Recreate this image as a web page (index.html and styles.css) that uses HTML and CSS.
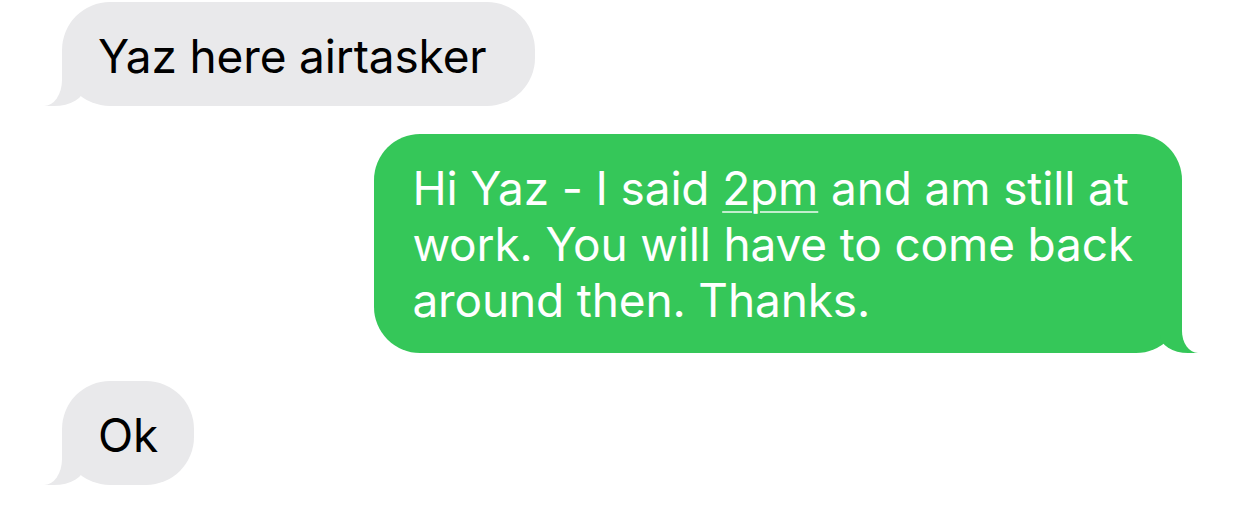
FILE: index.html
```html
<!DOCTYPE html>
<html lang="en">
<head>
  <meta charset="UTF-8" />
  <meta name="viewport" content="width=device-width, initial-scale=1.0" />
  <title>Messages</title>
  <link rel="stylesheet" href="styles.css">
</head>
<body>
  <div class="thread">
    <div class="bubble received wide">Yaz here airtasker</div>

    <div class="bubble sent">
      Hi Yaz - I said <span class="date-link">2pm</span> and am still at<br>
      work. You will have to come back<br>
      around then. Thanks.
    </div>

    <div class="bubble received">Ok</div>
  </div>
</body>
</html>
```

FILE: styles.css
```css
* {
  box-sizing: border-box;
}

body {
  margin: 0;
  background: white;
  font-family: Inter, "Noto Sans", sans-serif;
}

.thread {
  display: flex;
  flex-direction: column;
  align-items: flex-start;
  gap: 28px;
  padding: 2px 60px 0 62px;
}

.bubble {
  position: relative;
  z-index: 0;
  font-size: 46px;
  line-height: 56px;
  letter-spacing: -0.15px;
  padding: 26px 36px 22px 36px;
  border-radius: 48px;
  white-space: nowrap;
}

.received {
  background: #e9e9eb;
  color: black;
}

.wide {
  padding-right: 48px;
}

.sent {
  align-self: flex-end;
  background: #35c759;
  color: white;
  padding: 26px 49px 25px 38px;
  border-radius: 46px;
}

.date-link {
  text-decoration: underline;
  text-decoration-color: rgba(255, 255, 255, 0.7);
  text-decoration-thickness: 2px;
  text-underline-offset: 6px;
}

/* tails */
.bubble::before,
.bubble::after {
  content: "";
  position: absolute;
  bottom: 0;
}

.received::before {
  z-index: -1;
  left: -19px;
  width: 41px;
  height: 48px;
  background: #e9e9eb;
  border-bottom-right-radius: 30px 18px;
}

.received::after {
  left: -60px;
  width: 60px;
  height: 50px;
  background: white;
  border-bottom-right-radius: 18px 26px;
}

.sent::before {
  z-index: -1;
  right: -16px;
  width: 38px;
  height: 46px;
  background: #35c759;
  border-bottom-left-radius: 28px 18px;
}

.sent::after {
  right: -60px;
  width: 60px;
  height: 50px;
  background: white;
  border-bottom-left-radius: 16px 22px;
}
```
